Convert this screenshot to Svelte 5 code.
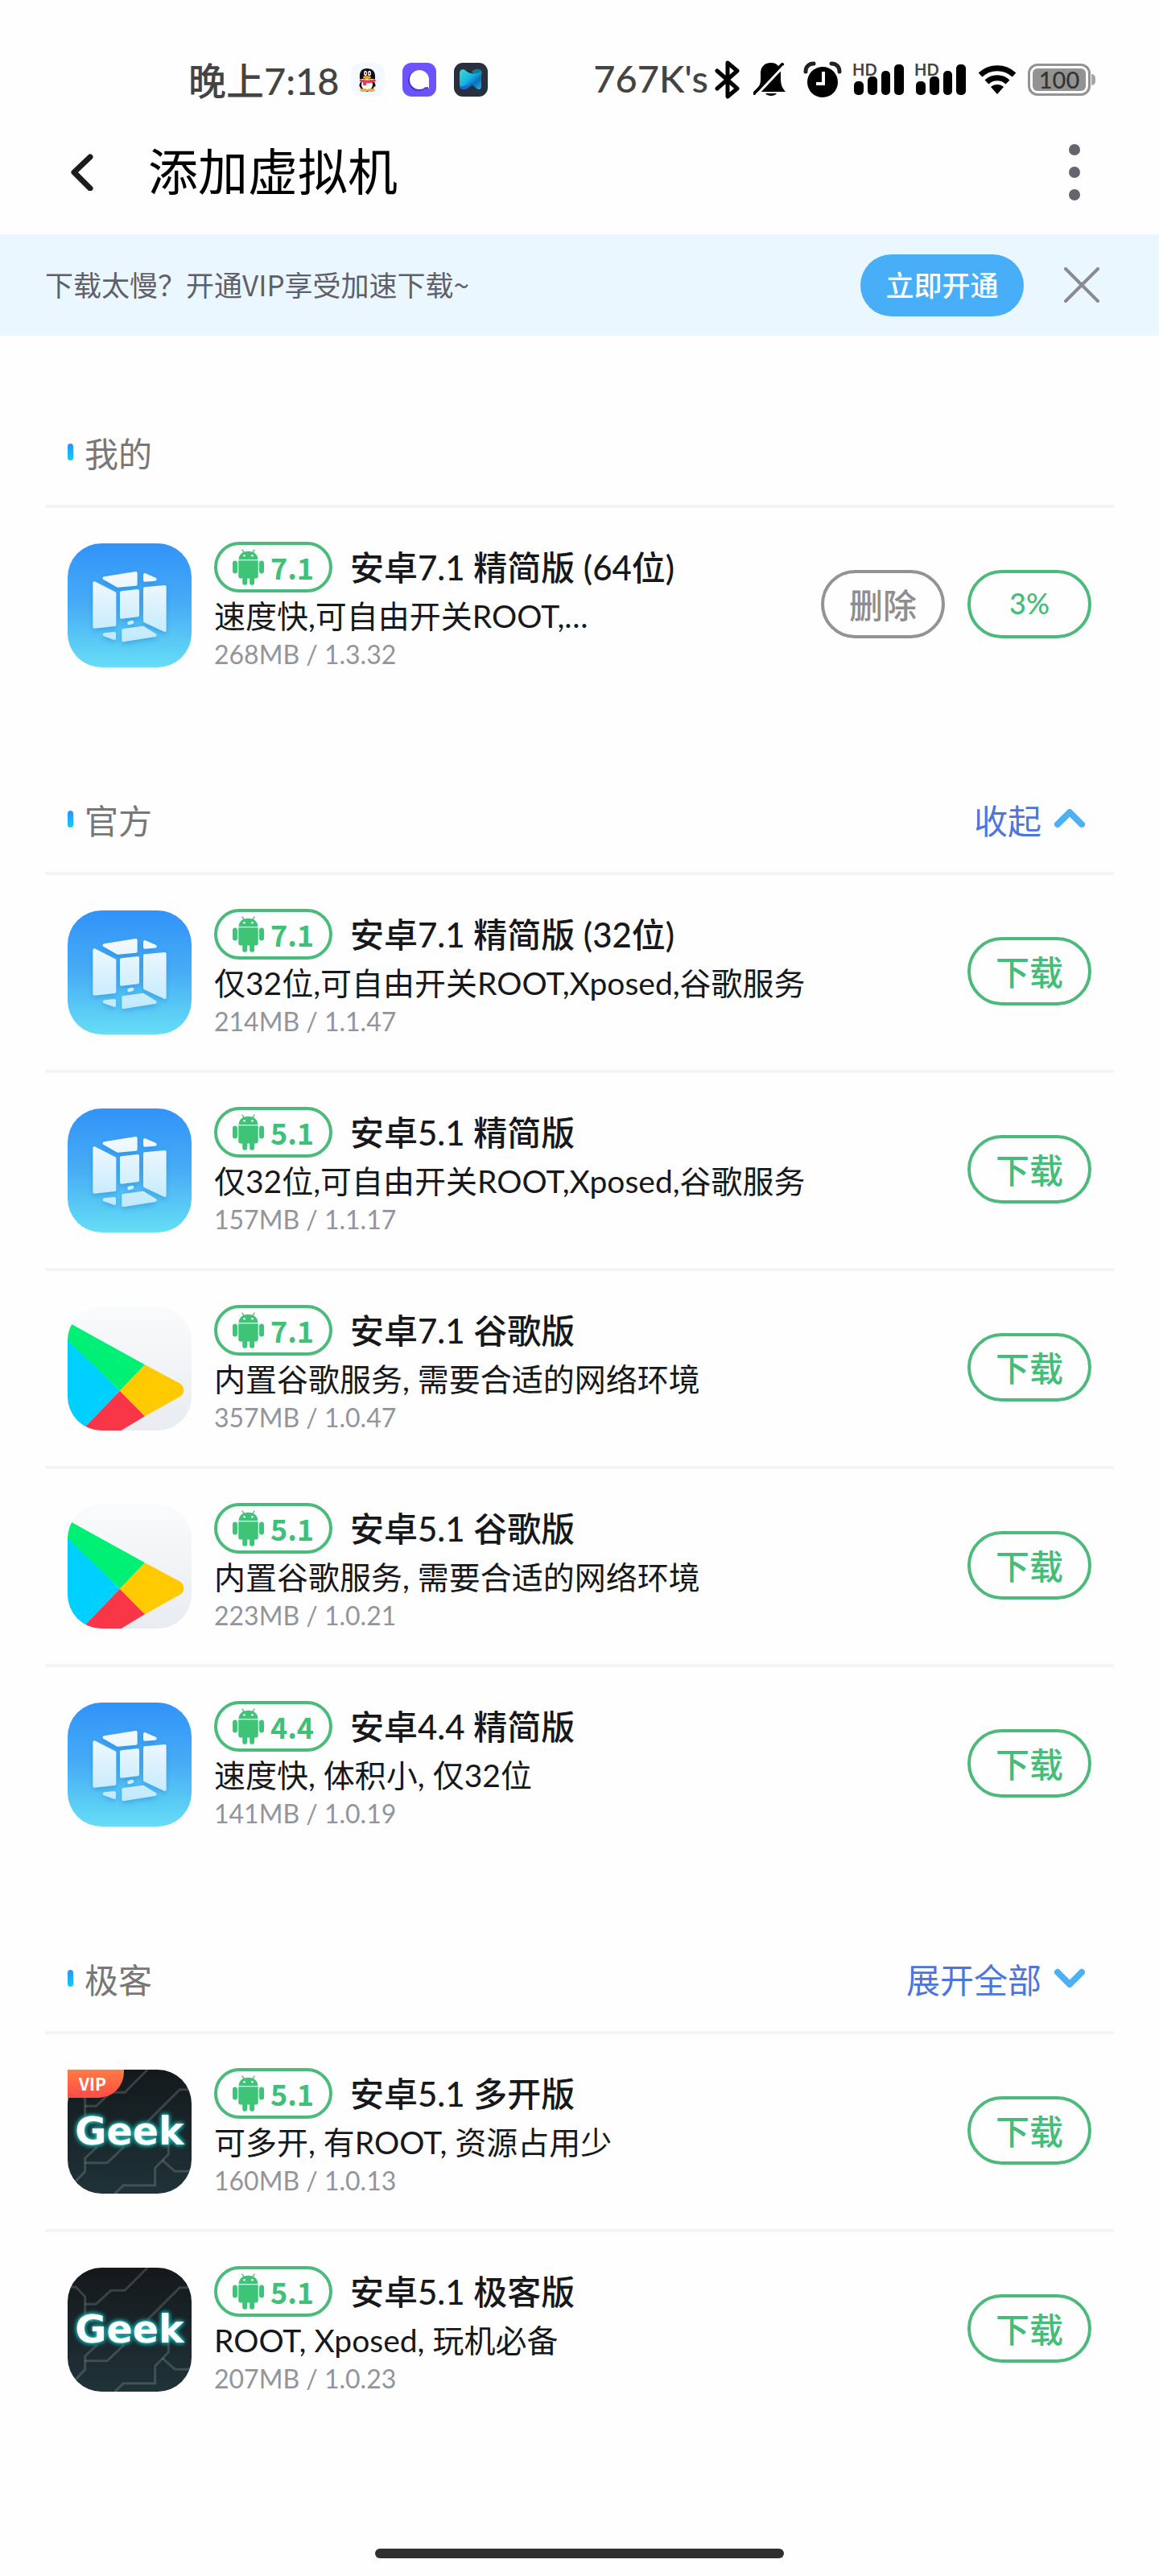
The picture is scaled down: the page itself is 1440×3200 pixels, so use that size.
<script>
	const COLLAPSED_COUNT = 2;

	let showBanner = $state(true);

	let sections = $state([
		{
			title: "我的",
			expandable: false,
			expanded: true,
			items: [
				{ icon: "vm", version: "7.1", name: "安卓7.1 精简版 (64位)", desc: "速度快,可自由开关ROOT,…", size: "268MB", build: "1.3.32", progress: 3 },
			],
		},
		{
			title: "官方",
			expandable: true,
			expanded: true,
			items: [
				{ icon: "vm", version: "7.1", name: "安卓7.1 精简版 (32位)", desc: "仅32位,可自由开关ROOT,Xposed,谷歌服务", size: "214MB", build: "1.1.47" },
				{ icon: "vm", version: "5.1", name: "安卓5.1 精简版", desc: "仅32位,可自由开关ROOT,Xposed,谷歌服务", size: "157MB", build: "1.1.17" },
				{ icon: "play", version: "7.1", name: "安卓7.1 谷歌版", desc: "内置谷歌服务, 需要合适的网络环境", size: "357MB", build: "1.0.47" },
				{ icon: "play", version: "5.1", name: "安卓5.1 谷歌版", desc: "内置谷歌服务, 需要合适的网络环境", size: "223MB", build: "1.0.21" },
				{ icon: "vm", version: "4.4", name: "安卓4.4 精简版", desc: "速度快, 体积小, 仅32位", size: "141MB", build: "1.0.19" },
			],
		},
		{
			title: "极客",
			expandable: true,
			expanded: false,
			items: [
				{ icon: "geek", vip: true, version: "5.1", name: "安卓5.1 多开版", desc: "可多开, 有ROOT, 资源占用少", size: "160MB", build: "1.0.13" },
				{ icon: "geek", version: "5.1", name: "安卓5.1 极客版", desc: "ROOT, Xposed, 玩机必备", size: "207MB", build: "1.0.23" },
			],
		},
	]);

	function visibleItems(section) {
		return section.expanded ? section.items : section.items.slice(0, COLLAPSED_COUNT);
	}
</script>

{#snippet vmIcon()}
	<svg viewBox="0 0 462 462" aria-hidden="true">
		<defs>
			<linearGradient id="vm-bg" x1="0" y1="0" x2="0" y2="1">
				<stop offset="0" stop-color="#3193f9" />
				<stop offset="0.5" stop-color="#47adf5" />
				<stop offset="1" stop-color="#66def5" />
			</linearGradient>
			<linearGradient id="vm-face" gradientUnits="userSpaceOnUse" x1="0" y1="105" x2="0" y2="367">
				<stop offset="0" stop-color="#f5faff" />
				<stop offset="1" stop-color="#bfe9fd" />
			</linearGradient>
		</defs>
		<rect width="462" height="462" fill="url(#vm-bg)" />
		<g class="vm-cube" fill="url(#vm-face)" stroke="url(#vm-face)" stroke-width="12" stroke-linejoin="round">
			<path d="M137 130L254 111V152L187 158Z" />
			<path d="M288 117L326 134L288 137Z" />
			<path d="M100 148L175 186V303L100 311Z" />
			<path d="M201 184L261 177V268L201 275Z" />
			<path d="M288 169L362 162V324L288 289Z" />
			<path d="M229 296L241 293V294L229 298Z" />
			<path d="M137 340L174 336V354Z" />
			<path d="M208 324L281 314L326 342L208 361Z" />
		</g>
	</svg>
{/snippet}

{#snippet playIcon()}
	<svg viewBox="0 0 462 462" aria-hidden="true">
		<defs>
			<linearGradient id="play-bg" x1="0" y1="0" x2="0" y2="1">
				<stop offset="0" stop-color="#fafbfc" />
				<stop offset="1" stop-color="#e8ecf1" />
			</linearGradient>
		</defs>
		<rect width="462" height="462" fill="url(#play-bg)" />
		<path fill="#00d0ff" d="M0 119L195 314L52 462H0Z" />
		<path fill="#00f076" d="M0 58L288 217L195 314L0 125Z" />
		<path fill="#f93647" d="M195 314L288 409L200 462H52Z" />
		<path fill="#ffcb00" d="M288 217L417 286Q433 296 433 312T417 337L288 409L195 314Z" />
	</svg>
{/snippet}

{#snippet geekIcon()}
	<svg viewBox="0 0 462 462" aria-hidden="true">
		<defs>
			<linearGradient id="geek-bg" x1="0" y1="0" x2="0" y2="1">
				<stop offset="0" stop-color="#14181b" />
				<stop offset="1" stop-color="#1f3339" />
			</linearGradient>
		</defs>
		<rect width="462" height="462" fill="url(#geek-bg)" />
		<g fill="none" stroke="#ffffff" stroke-opacity="0.16" stroke-width="9">
			<path d="M298 0L213 85H161L106 136H65" />
			<path d="M0 72H31L65 108V185L95 200" />
			<path d="M468 74H418L298 194" />
			<path d="M110 288L65 330V380L31 415" />
			<path d="M65 347H148L210 288" />
			<path d="M376 265V315L326 367V431H208L176 462" />
			<path d="M354 338L400 379H462" />
		</g>
		<text class="geek-word" x="231" y="280" text-anchor="middle">Geek</text>
	</svg>
{/snippet}

{#snippet androidIcon()}
	<svg class="android" viewBox="0 0 118 136" aria-hidden="true">
		<path d="M35 2L44 15M83 2L74 15" fill="none" stroke="#3ec477" stroke-width="4" />
		<g fill="#3ec477">
			<path d="M23 39C23 20 38 8 59 8S95 20 95 39Z" />
			<path d="M22 43H96V102Q96 110 88 110H30Q22 110 22 102Z" />
			<rect x="0" y="44" width="18" height="48" rx="9" />
			<rect x="100" y="44" width="18" height="48" rx="9" />
			<rect x="37" y="96" width="18" height="39" rx="8" />
			<rect x="64" y="96" width="18" height="39" rx="8" />
		</g>
		<circle cx="44" cy="25" r="4" fill="#fff" />
		<circle cx="74" cy="25" r="4" fill="#fff" />
	</svg>
{/snippet}

{#snippet signal()}
	<span class="signal">
		<span class="hd">HD</span>
		<svg viewBox="0 0 62 38" width="62" height="38" aria-hidden="true">
			<rect x="0" y="21" width="12" height="17" rx="5" />
			<rect x="17" y="15" width="12" height="23" rx="5" />
			<rect x="34" y="8" width="11" height="30" rx="5" />
			<rect x="50" y="0" width="12" height="38" rx="5" />
		</svg>
	</span>
{/snippet}

<div class="screen">
	<div class="status">
		<div class="status-left">
			<span class="status-text">晚上7:18</span>
			<div class="tiles">
				<svg viewBox="0 0 42 42" width="42" height="42" aria-hidden="true">
					<rect width="42" height="42" rx="12" fill="#f4f8ff" />
					<path d="M12 24C9 29 11 31 13 29H28C30 31 32 29 29 24Z" fill="#111" />
					<ellipse cx="20" cy="28" rx="9" ry="8" fill="#111" />
					<ellipse cx="20" cy="27" rx="7" ry="7" fill="#fff" />
					<ellipse cx="16" cy="34" rx="5" ry="2" fill="#e8b04c" />
					<ellipse cx="25" cy="34" rx="5" ry="2" fill="#e8b04c" />
					<path d="M11 20C10 10 14 7 20 7S31 10 30 20Z" fill="#111" />
					<ellipse cx="18" cy="13" rx="2" ry="3" fill="#fff" />
					<ellipse cx="23" cy="13" rx="2" ry="3" fill="#fff" />
					<circle cx="18" cy="13" r="1" fill="#111" />
					<circle cx="23" cy="13" r="1" fill="#111" />
					<ellipse cx="20" cy="18" rx="5" ry="2" fill="#f0a31c" />
					<path d="M11 20Q20 23 30 20L31 23Q25 26 19 25V28H15V24L11 23Z" fill="#ee3b47" />
				</svg>
				<svg viewBox="0 0 42 42" width="42" height="42" aria-hidden="true">
					<rect width="42" height="42" rx="11" fill="#6b54fb" />
					<circle cx="20" cy="22" r="13" fill="#4a35cc" />
					<circle cx="21" cy="21" r="12" fill="#fff" />
					<path d="M33 21V32L27 30Z" fill="#fff" />
					<path d="M26 31L32 30V33Z" fill="#4a35cc" />
				</svg>
				<svg viewBox="0 0 42 42" width="42" height="42" aria-hidden="true">
					<defs>
						<linearGradient id="ribbon" x1="0" y1="0" x2="1" y2="1">
							<stop offset="0" stop-color="#3fdccb" />
							<stop offset="0.45" stop-color="#14b4e8" />
							<stop offset="0.7" stop-color="#0b6fb8" />
							<stop offset="1" stop-color="#1fb6f0" />
						</linearGradient>
					</defs>
					<rect width="42" height="42" rx="11" fill="#283040" />
					<path d="M22 11C27 6 35 7 35 13L31 20Z" fill="#127c94" />
					<path d="M7 13C7 8 12 7 15 10C19 14 26 15 34 11V29C34 34 30 34 27 31L21 26C17 32 7 35 7 28Z" fill="url(#ribbon)" />
					<path d="M7 28C12 32 17 25 23 27C17 34 7 36 7 28Z" fill="#2463d8" />
				</svg>
			</div>
		</div>
		<div class="status-right">
			<span class="status-text speed">767K's</span>
			<svg viewBox="0 0 32 48" width="32" height="48" aria-hidden="true">
				<path d="M3 13L28 35L16 45V3L28 13L3 35" fill="none" stroke="#000" stroke-width="5" stroke-linejoin="round" stroke-linecap="round" />
			</svg>
			<svg class="bell" viewBox="0 0 42 42" width="42" height="42" aria-hidden="true">
				<path d="M22 0C13 0 9 6 9 13V21C9 27 6 32 2 36H40C36 32 34 27 34 21V13C34 6 30 0 22 0Z" />
				<path d="M15 38H29C27 42 17 42 15 38Z" />
				<path d="M1 38L36 2" stroke="#000" stroke-width="4" stroke-linecap="round" />
				<path d="M4 40L38 4" stroke="#fefefe" stroke-width="3" />
			</svg>
			<svg class="alarm" viewBox="0 0 48 46" width="48" height="46" aria-hidden="true">
				<circle cx="24" cy="26" r="19" />
				<path d="M3 13C3 7 7 3 13 3M35 3C41 3 45 7 45 13" fill="none" stroke="#222" stroke-width="5" stroke-linecap="round" />
				<path d="M25 13V28H16" fill="none" stroke="#fff" stroke-width="4" />
			</svg>
			{@render signal()}
			{@render signal()}
			<svg class="wifi" viewBox="0 0 48 36" width="48" height="36" aria-hidden="true">
				<g fill="none" stroke="#000" stroke-width="7">
					<path d="M3 12C15 1 33 1 45 12" />
					<path d="M11 21C18 14 30 14 37 21" />
				</g>
				<path d="M16 27C20 23 28 23 32 27L24 36Z" />
			</svg>
			<span class="battery"><span class="battery-level">100</span></span>
		</div>
	</div>

	<header>
		<button class="icon-button" aria-label="返回">
			<svg viewBox="0 0 30 46" width="30" height="46" aria-hidden="true">
				<path d="M26 4L6 23L26 43" fill="none" stroke="#1a1c1e" stroke-width="7" stroke-linecap="round" stroke-linejoin="round" />
			</svg>
		</button>
		<h1>添加虚拟机</h1>
		<button class="icon-button" aria-label="更多">
			<svg viewBox="0 0 14 70" width="14" height="70" aria-hidden="true">
				<g fill="#66656d">
					<circle cx="7" cy="7" r="7" />
					<circle cx="7" cy="35" r="7" />
					<circle cx="7" cy="63" r="7" />
				</g>
			</svg>
		</button>
	</header>

	{#if showBanner}
		<div class="banner">
			<p>下载太慢？开通VIP享受加速下载~</p>
			<button class="upgrade">立即开通</button>
			<button class="icon-button" aria-label="关闭" onclick={() => (showBanner = false)}>
				<svg viewBox="0 0 44 44" width="44" height="44" aria-hidden="true">
					<path d="M2 2L42 42M42 2L2 42" fill="none" stroke="#8b8a90" stroke-width="4" stroke-linecap="round" />
				</svg>
			</button>
		</div>
	{/if}

	<main>
		{#each sections as section}
			<section>
				<div class="section-head">
					<h2>{section.title}</h2>
					{#if section.expandable}
						<button class="toggle" onclick={() => (section.expanded = !section.expanded)}>
							{section.expanded ? "收起" : "展开全部"}
							<svg viewBox="0 0 38 24" width="38" height="24" aria-hidden="true">
								<path d={section.expanded ? "M4 19L19 4L34 19" : "M4 5L19 20L34 5"} fill="none" stroke="#4db0f5" stroke-width="8" stroke-linecap="round" stroke-linejoin="round" />
							</svg>
						</button>
					{/if}
				</div>
				<ul>
					{#each visibleItems(section) as item}
						<li>
							<div class="app-icon">
								<div class="app-art">
									{#if item.icon === "vm"}
										{@render vmIcon()}
									{:else if item.icon === "play"}
										{@render playIcon()}
									{:else}
										{@render geekIcon()}
									{/if}
								</div>
								{#if item.vip}
									<span class="vip">VIP</span>
								{/if}
							</div>
							<div class="info">
								<div class="title-line">
									<span class="version">{@render androidIcon()}{item.version}</span>
									<h3>{item.name}</h3>
								</div>
								<p class="desc">{item.desc}</p>
								<p class="meta">{item.size} / {item.build}</p>
							</div>
							<div class="actions">
								{#if item.progress !== undefined}
									<button class="pill grey">删除</button>
									<button class="pill progress">{item.progress}%</button>
								{:else}
									<button class="pill">下载</button>
								{/if}
							</div>
						</li>
					{/each}
				</ul>
			</section>
		{/each}
	</main>

	<div class="home-bar"></div>
</div>

<style>
	:global(body) {
		background: #fefefe;
	}
	.screen {
		display: flex;
		flex-direction: column;
		min-height: 100vh;
		box-sizing: border-box;
		font-family: Lato, "Noto Sans CJK SC", sans-serif;
		color: #17181a;
	}
	h1,
	h2,
	h3,
	p,
	ul {
		margin: 0;
		padding: 0;
	}
	svg {
		display: block;
		flex: none;
	}
	button {
		font-family: inherit;
		border: 0;
		background: none;
		padding: 0;
		cursor: pointer;
	}

	.status {
		display: flex;
		justify-content: space-between;
		align-items: center;
		height: 74px;
		padding: 62px 78px 0 234px;
		font-size: 47px;
		font-weight: 500;
		color: #444;
	}
	.status-left,
	.status-right,
	.tiles {
		display: flex;
		align-items: center;
	}
	.status-left {
		gap: 14px;
	}
	.status-text {
		padding-bottom: 4px;
	}
	.tiles {
		gap: 22px;
	}
	.status-right svg {
		fill: #000;
	}
	.speed {
		margin-right: 8px;
	}
	.bell {
		margin-left: 16px;
	}
	.alarm {
		margin-left: 20px;
		margin-right: 15px;
	}
	.signal {
		position: relative;
		margin-right: 15px;
	}
	.hd {
		position: absolute;
		top: -4px;
		left: -2px;
		font-size: 20px;
		line-height: 20px;
		font-weight: 700;
	}
	.battery {
		position: relative;
		display: flex;
		box-sizing: border-box;
		width: 78px;
		height: 40px;
		padding: 3px;
		margin-left: 14px;
		margin-right: 7px;
		border: 3px solid #939393;
		border-radius: 12px;
	}
	.battery::after {
		content: "";
		position: absolute;
		right: -9px;
		top: 10px;
		width: 5px;
		height: 14px;
		border-radius: 0 7px 7px 0;
		background: #a5a5a5;
	}
	.battery-level {
		flex: 1;
		border-radius: 6px;
		background: #939393;
		color: #333;
		font-size: 29px;
		line-height: 28px;
		text-align: center;
	}

	header {
		display: flex;
		align-items: center;
		height: 155px;
		padding: 0 98px 0 86px;
	}
	h1 {
		flex: 1;
		margin-left: 68px;
		padding-bottom: 8px;
		font-size: 62px;
		font-weight: 400;
		color: #000;
	}

	.banner {
		display: flex;
		align-items: center;
		height: 126px;
		padding: 0 74px 0 56px;
		background: #ebf7fe;
	}
	.banner p {
		flex: 1;
		padding-bottom: 4px;
		font-family: "Noto Sans CJK SC", sans-serif;
		font-size: 35px;
		color: #5f6069;
	}
	.upgrade {
		width: 203px;
		height: 77px;
		margin-right: 50px;
		padding-bottom: 4px;
		border-radius: 39px;
		background: #48aef7;
		color: #fff;
		font-size: 35px;
		font-weight: 500;
	}

	main {
		padding: 0 56px;
	}
	.section-head {
		display: flex;
		justify-content: space-between;
		align-items: center;
		height: 126px;
		padding: 81px 36px 3px 28px;
	}
	h2 {
		display: flex;
		align-items: center;
		gap: 14px;
		font-size: 42px;
		font-weight: 400;
		color: #777;
	}
	h2::before {
		content: "";
		width: 7px;
		height: 21px;
		border-radius: 4px;
		background: linear-gradient(#2b93f0, #12cbf7);
	}
	.toggle {
		display: flex;
		align-items: center;
		gap: 16px;
		font-size: 42px;
		color: #4d76dc;
	}

	ul {
		list-style: none;
	}
	li {
		display: flex;
		align-items: center;
		padding: 44px 28px;
		border-top: 4px solid #f4f4f4;
	}
	.app-icon {
		position: relative;
		flex: none;
		width: 154px;
		height: 154px;
	}
	.app-art {
		border-radius: 42px;
		overflow: hidden;
	}
	.vm-cube {
		filter: drop-shadow(0 8px 10px #1878c866);
	}
	.geek-word {
		fill: #fff;
		font-family: "DejaVu Sans", sans-serif;
		font-size: 143px;
		font-weight: 700;
		filter: drop-shadow(0 0 8px #19d3cf) drop-shadow(0 0 8px #19a3a0);
	}
	.vip {
		position: absolute;
		top: 0;
		left: 0;
		width: 62px;
		height: 35px;
		padding-right: 8px;
		border-bottom-right-radius: 32px;
		background: linear-gradient(#ff7c42, #ff4c48);
		color: #fff;
		font-family: "Noto Sans CJK SC", sans-serif;
		font-size: 21px;
		font-weight: 700;
		line-height: 34px;
		text-align: center;
	}

	.info {
		flex: 1;
		min-width: 0;
		margin: -4px 28px;
	}
	.title-line {
		display: flex;
		align-items: center;
		gap: 22px;
		height: 64px;
	}
	.version {
		display: flex;
		align-items: center;
		justify-content: center;
		gap: 8px;
		box-sizing: border-box;
		width: 147px;
		height: 63px;
		border: 4px solid #4cba7b;
		border-radius: 32px;
		color: #3fc077;
		font-family: "Noto Sans CJK SC", sans-serif;
		font-size: 36px;
		font-weight: 700;
	}
	.android {
		width: 39px;
		height: 45px;
	}
	h3 {
		padding-bottom: 4px;
		font-size: 42px;
		font-weight: 500;
	}
	.desc {
		font-size: 39px;
		line-height: 58px;
		white-space: nowrap;
		overflow: hidden;
		text-overflow: ellipsis;
	}
	.meta {
		font-size: 32px;
		line-height: 38px;
		color: #92959c;
	}

	.actions {
		display: flex;
		gap: 28px;
		padding-bottom: 4px;
	}
	.pill {
		box-sizing: border-box;
		width: 154px;
		height: 85px;
		padding-bottom: 2px;
		border: 4px solid #4cba7b;
		border-radius: 43px;
		color: #43bd77;
		font-size: 42px;
		font-weight: 500;
	}
	.grey {
		border-color: #939397;
		color: #8e8e91;
	}
	.progress {
		font-size: 36px;
	}

	.home-bar {
		width: 508px;
		height: 12px;
		margin: auto auto 22px;
		border-radius: 6px;
		background: #303030;
	}
</style>
